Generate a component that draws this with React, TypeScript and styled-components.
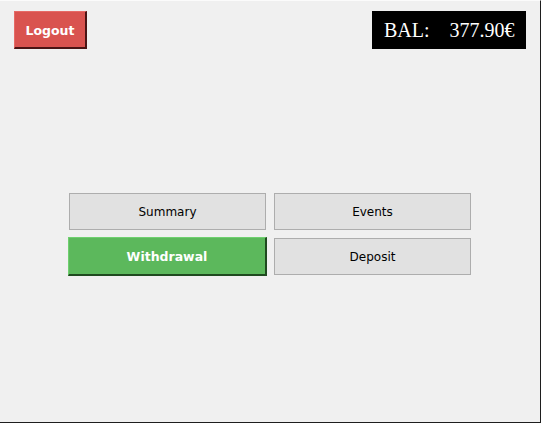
import React from "react";
import styled, { createGlobalStyle } from "styled-components";

const Global = createGlobalStyle`
  html, body { margin: 0; padding: 0; background: #f0f0f0; }
  * { box-sizing: border-box; }
`;

const Window = styled.div`
  width: 541px;
  height: 423px;
  background: #f0f0f0;
  border-top: 1px solid #fbfbfb;
  border-right: 1px solid #1e1e1e;
  border-bottom: 1px solid #1e1e1e;
  display: flex;
  flex-direction: column;
`;

const Header = styled.div`
  display: flex;
  justify-content: space-between;
  align-items: flex-start;
  padding: 10px 14px 0 14px;
`;

const LogoutButton = styled.button`
  width: 73px;
  height: 38px;
  background: #d9534f;
  color: #ffffff;
  font-family: "DejaVu Sans", Verdana, sans-serif;
  font-weight: bold;
  font-size: 12.5px;
  border-style: solid;
  border-width: 1px 2px 2px 1px;
  border-color: #e66a66 #4a1414 #4a1414 #e66a66;
  padding: 2px 0 0 0;
  cursor: pointer;
`;

const Balance = styled.div`
  width: 154px;
  height: 38px;
  background: #000;
  color: #fff;
  font-family: "Liberation Serif", "Times New Roman", serif;
  font-size: 20px;
  display: flex;
  align-items: center;
  padding: 0 12px;
  white-space: pre;
`;

const Main = styled.div`
  flex: 1;
  display: flex;
  align-items: center;
  justify-content: center;
  padding-bottom: 3px;
`;

const Grid = styled.div`
  display: grid;
  grid-template-columns: 197px 197px;
  grid-template-rows: 37px 37px;
  gap: 8px;
`;

const MenuButton = styled.button<{ $active?: boolean }>`
  font-family: "DejaVu Sans", Verdana, sans-serif;
  font-size: ${(p) => (p.$active ? "12.5px" : "12px")};
  font-weight: ${(p) => (p.$active ? "bold" : "normal")};
  color: ${(p) => (p.$active ? "#ffffff" : "#000000")};
  background: ${(p) => (p.$active ? "#5cb85c" : "#e1e1e1")};
  border-style: solid;
  border-width: ${(p) => (p.$active ? "1px 2px 2px 1px" : "1px")};
  border-color: ${(p) =>
    p.$active ? "#6fd06f #1f4a1f #1f4a1f #6fd06f" : "#adadad"};
  margin: ${(p) => (p.$active ? "-1px" : "0")};
  padding: ${(p) => (p.$active ? "1px 0 0 0" : "0")};
  cursor: pointer;
`;

export default function App() {
  return (
    <>
      <Global />
      <Window>
        <Header>
          <LogoutButton>Logout</LogoutButton>
          <Balance>{"BAL:    377.90€"}</Balance>
        </Header>
        <Main>
          <Grid>
            <MenuButton>Summary</MenuButton>
            <MenuButton>Events</MenuButton>
            <MenuButton $active>Withdrawal</MenuButton>
            <MenuButton>Deposit</MenuButton>
          </Grid>
        </Main>
      </Window>
    </>
  );
}
